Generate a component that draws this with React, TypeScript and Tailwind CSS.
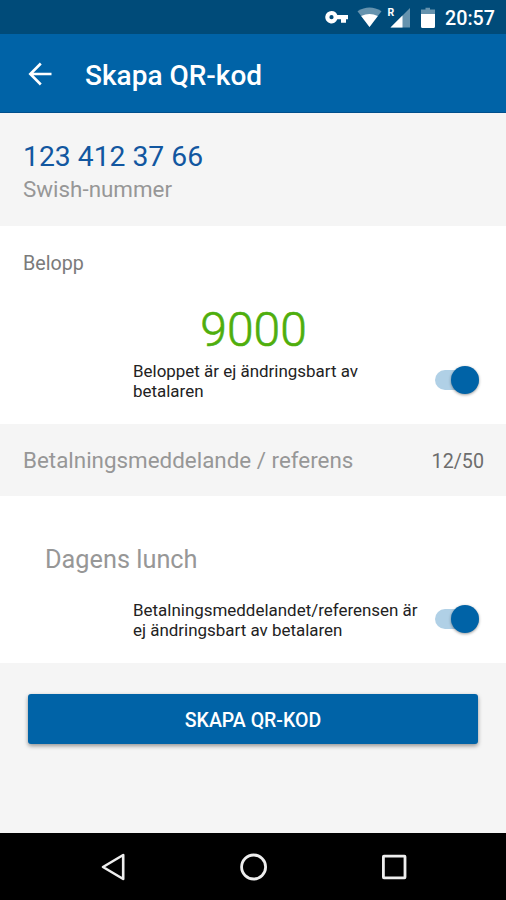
import { useState } from "react";

type SwitchRowProps = {
  lines: string[];
  checked: boolean;
  onToggle: () => void;
};

function SwitchRow({ lines, checked, onToggle }: SwitchRowProps) {
  return (
    <div className="flex h-10 items-center justify-between pl-[133px] pr-[27px]">
      <p className="whitespace-nowrap text-[16.95px] leading-5 text-[#222222]">
        {lines.map((line) => (
          <span key={line} className="block">
            {line}
          </span>
        ))}
      </p>

      <button
        type="button"
        role="switch"
        aria-checked={checked}
        aria-label={lines.join(" ")}
        onClick={onToggle}
        className={
          checked
            ? "mb-[2px] flex h-5 w-[44px] items-center justify-end rounded-full bg-[#b0d0e6]"
            : "mb-[2px] flex h-5 w-[44px] items-center justify-start rounded-full bg-[#c4c4c4]"
        }
      >
        <span
          className={
            checked
              ? "size-[28px] rounded-full bg-[#0063a7] shadow-[0_1px_3px_rgba(0,0,0,0.4)]"
              : "size-[28px] rounded-full bg-[#fafafa] shadow-[0_1px_3px_rgba(0,0,0,0.4)]"
          }
        />
      </button>
    </div>
  );
}

function StatusBar() {
  return (
    <div className="flex h-[34px] items-center justify-end bg-[#004b79] pr-[11px] text-white">
      <svg width="114" height="34" viewBox="0 0 114 34" fill="currentColor">
        {/* vpn key */}
        <path
          fillRule="evenodd"
          d="M6.5 11a6.2 6.2 0 1 0 5.8 8.3h3.7v3.5h5v-3.5h2v-4.2H12.3A6.2 6.2 0 0 0 6.5 11Zm0 4.1a2.1 2.1 0 1 1 0 4.2 2.1 2.1 0 0 1 0-4.2Z"
        />

        {/* wifi */}
        <path d="M32.5 11.3Q44.5 3.8 56.5 11.3L44.5 27Z" opacity="0.4" />
        <path d="M36.2 16.1Q44.5 11.9 52.8 16.1L44.5 27Z" />

        {/* roaming signal */}
        <path d="M85 8v19.5H65.5Z" opacity="0.4" />
        <path d="M77.5 15.5v12h-12Z" />
        <text x="62.5" y="16" fontFamily="Roboto, sans-serif" fontSize="10.5" fontWeight="700">
          R
        </text>

        {/* battery */}
        <path d="M100.5 7.7h4.5V9.5h5v4.5H96V9.5h4.5Z" opacity="0.4" />
        <path d="M96 14h14v12.5a1.5 1.5 0 0 1-1.5 1.5h-11a1.5 1.5 0 0 1-1.5-1.5Z" />
      </svg>
      <span className="ml-[6px] mt-[3px] text-[19.7px] font-medium leading-none">
        20:57
      </span>
    </div>
  );
}

function NavigationBar() {
  return (
    <nav className="flex h-[67px] items-center justify-between bg-black pl-[100px] pr-[99px] text-[#eeeeee]">
      <button type="button" aria-label="Tillbaka">
        <svg width="26" height="30" viewBox="0 0 26 30" fill="none" stroke="currentColor" strokeWidth="2.6" strokeLinejoin="round">
          <path d="M23.2 3v24L3 15Z" />
        </svg>
      </button>
      <button type="button" aria-label="Hem">
        <svg width="28" height="28" viewBox="0 0 28 28" fill="none" stroke="currentColor" strokeWidth="2.8">
          <circle cx="13.6" cy="14" r="12" />
        </svg>
      </button>
      <button type="button" aria-label="Senaste appar">
        <svg width="26" height="26" viewBox="0 0 26 26" fill="none" stroke="currentColor" strokeWidth="2.8" strokeLinejoin="round">
          <rect x="2.4" y="2.2" width="21.6" height="21.6" rx="0.5" />
        </svg>
      </button>
    </nav>
  );
}

export default function App() {
  const [amountLocked, setAmountLocked] = useState(true);
  const [messageLocked, setMessageLocked] = useState(true);

  return (
    <div className="flex h-[900px] w-[506px] flex-col overflow-hidden bg-[#f5f5f5] font-[Roboto,sans-serif]">
      <StatusBar />

      <header className="flex h-[79px] items-center border-b border-[#004f8c] bg-[#0063a7] pl-[28px] text-white">
        <button type="button" aria-label="Tillbaka" className="mt-px">
          <svg width="24" height="24" viewBox="0 0 24 24" fill="none" stroke="currentColor" strokeWidth="2.6">
            <path d="M23.5 12H3M12.8 1.5 2.3 12l10.5 10.5" />
          </svg>
        </button>
        <h1 className="ml-[33px] mt-[5px] text-[28px] font-medium leading-8">Skapa QR-kod</h1>
      </header>

      <section className="h-[113px] px-[23px] pt-7">
        <p className="text-[28.3px] leading-8 text-[#1257a0]">123 412 37 66</p>
        <p className="mt-[2px] text-[22.4px] leading-7 text-[#979797]">Swish-nummer</p>
      </section>

      <section className="h-[198px] bg-white pt-[26px]">
        <p className="px-[23px] text-[19.7px] leading-6 text-[#7b7b7b]">Belopp</p>
        <p className="mt-[26px] pl-px text-center text-[48px] font-light leading-[56px] text-[#4fae0d] [-webkit-text-stroke:0.6px_#4fae0d]">
          9000
        </p>
        <div className="mt-[3px]">
          <SwitchRow
            lines={["Beloppet är ej ändringsbart av", "betalaren"]}
            checked={amountLocked}
            onToggle={() => setAmountLocked(!amountLocked)}
          />
        </div>
      </section>

      <section className="flex h-[72px] items-center justify-between pl-[23px] pr-[22px]">
        <p className="text-[22.4px] leading-7 text-[#979797]">Betalningsmeddelande / referens</p>
        <p className="mt-[3px] text-[19.7px] leading-6 text-[#6d6d6d]">12/50</p>
      </section>

      <section className="h-[167px] bg-white pt-[48px]">
        <p className="pl-[45px] text-[25.3px] leading-8 text-[#979797]">Dagens lunch</p>
        <div className="mt-[24px]">
          <SwitchRow
            lines={["Betalningsmeddelandet/referensen är", "ej ändringsbart av betalaren"]}
            checked={messageLocked}
            onToggle={() => setMessageLocked(!messageLocked)}
          />
        </div>
      </section>

      <div className="flex-1 px-[28px] pt-[31px]">
        <button
          type="button"
          className="h-[50px] w-full rounded-[3px] bg-[#0063a7] pt-[3px] text-[19.5px] font-medium text-white shadow-[0_2px_4px_rgba(0,0,0,0.4)]"
        >
          SKAPA QR-KOD
        </button>
      </div>

      <NavigationBar />
    </div>
  );
}
